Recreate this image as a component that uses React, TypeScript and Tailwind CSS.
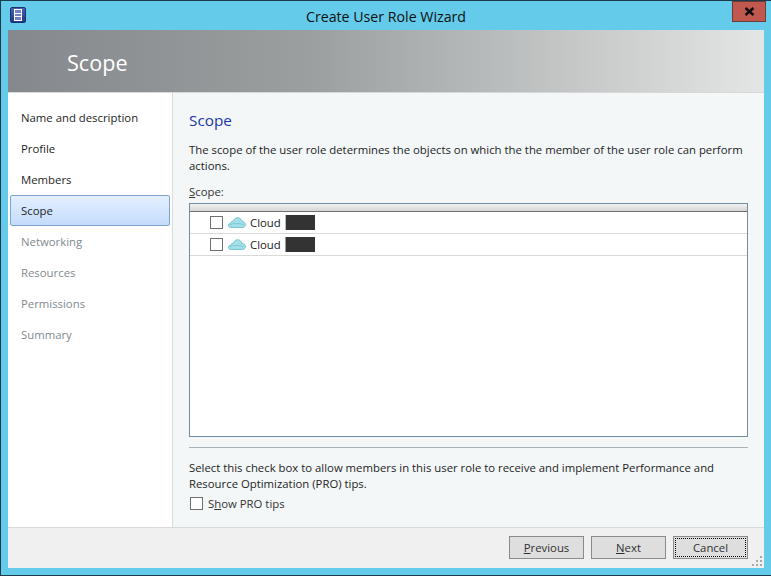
const font = { fontFamily: '"Open Sans", sans-serif' };

function CloudIcon() {
  return (
    <svg width="18" height="11" viewBox="0 0 18 11" className="shrink-0">
      <path
        d="M2.6 10.4C1 10.4.5 9.2.5 8.3c0-1.1.9-2 2.1-2.1C3 4.9 4.1 4.2 5.2 4.4 6 2.2 7.7.7 9.6.7c2.2 0 3.9 1.6 4.3 3.7 1.9-.1 3.6 1.5 3.6 3.2 0 1.6-1.2 2.8-2.9 2.8H2.6Z"
        fill="#a5e0e8"
        stroke="#5db7c9"
        strokeWidth="0.8"
      />
      <path d="M2 7.6c3-1.4 10-1.4 14 0" fill="none" stroke="#6cc3d3" strokeWidth="0.8" />
    </svg>
  );
}

function CloudRow({ stray }: { stray?: boolean }) {
  return (
    <div className="h-[22px] flex items-center pl-[20px] border-b border-[#d9d9d9] text-[#1a1a1a]">
      <span className="w-[13px] h-[13px] border border-[#707070] bg-white shrink-0" />
      <span className="ml-[5px] flex"><CloudIcon /></span>
      <span className="ml-[4px] w-[35px]">Cloud</span>
      <span className={`w-[1px] h-[15px] ${stray ? "bg-[#9a9a9a]" : "bg-[#bbbbbb]"}`} />
      <span className="h-[15px] w-[29px] bg-[#333333]" />
    </div>
  );
}

function NavItem({ label, state }: { label: string; state?: "active" | "off" }) {
  if (state === "active") {
    return (
      <div className="h-[31px] mx-[2px] pl-[10px] flex items-center rounded-[2px] border border-[#7da2ce] bg-gradient-to-b from-[#e4efff] to-[#c3dcfb] text-[#1e1e1e]">
        {label}
      </div>
    );
  }
  return (
    <div className={`h-[31px] pl-[13px] flex items-center ${state === "off" ? "text-[#7f8a8f]" : "text-[#1e1e1e]"}`}>
      {label}
    </div>
  );
}

function WizardButton({ children, focused }: { children: React.ReactNode; focused?: boolean }) {
  return (
    <div className="w-[75px] h-[23px] border border-[#8a8a8a] bg-[#dedede] text-[#303030] p-[1px]">
      <div className={`w-full h-full flex items-center justify-center ${focused ? "border border-dotted border-black" : ""}`}>
        {children}
      </div>
    </div>
  );
}

export default function App() {
  return (
    <div style={font} className="w-[771px] h-[576px] bg-[#64cbea] border border-[#1b3a4b] border-r-0 flex flex-col overflow-hidden text-[11.35px] leading-[15px]">
      <div className="h-[29px] shrink-0 flex items-start relative">
        <div className="w-[16px] h-[16px] ml-[9px] mt-[6px] rounded-[2px] bg-gradient-to-b from-[#4a63b0] to-[#233a86] border border-[#1d2f70] flex items-center justify-center">
          <div className="w-[8px] h-[12px] border border-white bg-[#6f83c4] flex flex-col justify-evenly">
            <div className="h-[1px] bg-white" />
            <div className="h-[1px] bg-white" />
          </div>
        </div>
        <div className="flex-1 text-center text-[14.2px] text-[#101010] pt-[6px] pl-[14px] leading-[20px]">Create User Role Wizard</div>
        <div className="w-[34px] h-[21px] mr-[5px] bg-[#c1584f] border border-[#6d3a36] flex items-center justify-center">
          <svg width="11" height="9" viewBox="0 0 11 9">
            <path d="M1.5 1 9.5 8M9.5 1 1.5 8" stroke="#0c0c0c" strokeWidth="2.4" />
          </svg>
        </div>
      </div>

      <div className="flex-1 min-h-0 ml-[7px] mr-[7px] flex flex-col bg-[#f3f7f8]">
        <div className="h-[63px] shrink-0 bg-gradient-to-r from-[#85888d] via-[#9b9f9f] via-40% to-[#e4e6e5] border-b border-[#d6d9d9] flex items-center pl-[59px] pt-[3px]">
          <span className="text-[21.6px] leading-[30px] text-white">Scope</span>
        </div>

        <div className="flex-1 min-h-0 flex">
          <div className="w-[165px] shrink-0 bg-white border-r border-[#d9dcdc] pt-[9px]">
            <NavItem label="Name and description" />
            <NavItem label="Profile" />
            <NavItem label="Members" />
            <NavItem label="Scope" state="active" />
            <NavItem label="Networking" state="off" />
            <NavItem label="Resources" state="off" />
            <NavItem label="Permissions" state="off" />
            <NavItem label="Summary" state="off" />
          </div>

          <div className="flex-1 pl-[16px] pr-[16px] pt-[17px] text-[#1e1e1e]">
            <div className="text-[15.3px] leading-[20px] text-[#1a35a8]">Scope</div>
            <p className="mt-[12px] leading-[16px]">
              The scope of the user role determines the objects on which the the member of the user role can perform actions.
            </p>
            <div className="mt-[10px] h-[16px] text-[#333]"><u>S</u>cope:</div>
            <div className="mt-[3px] h-[234px] border border-[#6f8ea3] bg-white">
              <div className="h-[8px] border-b border-[#6f6f6f] bg-gradient-to-b from-[#f2f2f2] to-[#d5d5d5]" />
              <CloudRow />
              <CloudRow stray />
            </div>
            <div className="mt-[10px] border-t border-[#a9b4ba]" />
            <p className="mt-[12px] leading-[16px]">
              Select this check box to allow members in this user role to receive and implement Performance and Resource Optimization (PRO) tips.
            </p>
            <div className="mt-[4px] pl-[1px] flex items-center text-[#333]">
              <span className="w-[13px] h-[13px] border border-[#707070] bg-white" />
              <span className="ml-[5px]">S<u>h</u>ow PRO tips</span>
            </div>
          </div>
        </div>

        <div className="h-[41px] shrink-0 bg-[#f0f0f0] border-t border-[#d9d9d9] flex items-start justify-end gap-[7px] pt-[8px] pr-[16px] relative">
          <WizardButton><span><u>P</u>revious</span></WizardButton>
          <WizardButton><span><u>N</u>ext</span></WizardButton>
          <WizardButton focused>Cancel</WizardButton>
          <svg width="12" height="12" viewBox="0 0 12 12" className="absolute right-[1px] bottom-[1px]">
            <g fill="#a8a8a8">
              <rect x="9" y="1" width="2" height="2" />
              <rect x="5" y="5" width="2" height="2" />
              <rect x="9" y="5" width="2" height="2" />
              <rect x="1" y="9" width="2" height="2" />
              <rect x="5" y="9" width="2" height="2" />
              <rect x="9" y="9" width="2" height="2" />
            </g>
          </svg>
        </div>
      </div>

      <div className="h-[7px] shrink-0" />
    </div>
  );
}
